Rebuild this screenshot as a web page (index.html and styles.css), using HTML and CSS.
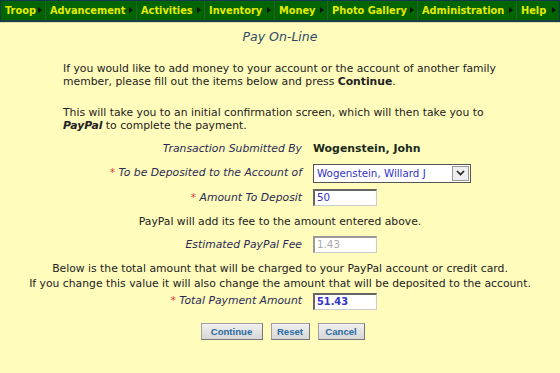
FILE: index.html
```html
<!DOCTYPE html>
<html>
<head>
<meta charset="utf-8">
<link rel="stylesheet" href="styles.css">
</head>
<body>
<nav class="nav">
  <a class="nav-item nav-troop">Troop<span class="arr"></span></a>
  <a class="nav-item nav-adv">Advancement<span class="arr"></span></a>
  <a class="nav-item nav-act">Activities<span class="arr"></span></a>
  <a class="nav-item nav-inv">Inventory<span class="arr"></span></a>
  <a class="nav-item nav-money">Money<span class="arr"></span></a>
  <a class="nav-item nav-photo">Photo Gallery<span class="arr"></span></a>
  <a class="nav-item nav-admin">Administration<span class="arr"></span></a>
  <a class="nav-item nav-last">Help<span class="arr"></span></a>
</nav>
<main class="page">
  <h1 class="title">Pay On-Line</h1>
  <p class="intro intro-first">If you would like to add money to your account or the account of another family member, please fill out the items below and press <b>Continue</b>.</p>
  <p class="intro">This will take you to an initial confirmation screen, which will then take you to <b><i>PayPal</i></b> to complete the payment.</p>
  <form class="form">
    <div class="label row-a">Transaction Submitted By</div>
    <div class="value row-a">Wogenstein, John</div>

    <div class="label row-a"><span class="req">*</span> To be Deposited to the Account of</div>
    <div class="field row-a">
      <div class="select"><span class="select-text">Wogenstein, Willard J</span><span class="select-btn"><svg width="9" height="6" viewBox="0 0 9 6"><path d="M1 1 L4.5 4.5 L8 1" fill="none" stroke="#222" stroke-width="1.6"/></svg></span></div>
    </div>

    <div class="label row-b"><span class="req">*</span> Amount To Deposit</div>
    <div class="field row-b"><span class="input">50</span></div>

    <div class="note row-a">PayPal will add its fee to the amount entered above.</div>

    <div class="label row-c">Estimated PayPal Fee</div>
    <div class="field row-c"><span class="input disabled">1.43</span></div>

    <div class="note note-wide">Below is the total amount that will be charged to your PayPal account or credit card.<br>If you change this value it will also change the amount that will be deposited to the account.</div>

    <div class="label row-d"><span class="req">*</span> Total Payment Amount</div>
    <div class="field row-d"><span class="input bold">51.43</span></div>

    <div class="buttons">
      <span class="btn btn-continue">Continue</span>
      <span class="btn btn-reset">Reset</span>
      <span class="btn btn-cancel">Cancel</span>
    </div>
  </form>
</main>
</body>
</html>
```
FILE: styles.css
```css
html, body {
  margin: 0;
  padding: 0;
  background: #fffcbc;
}
body {
  font-family: "DejaVu Sans", Verdana, sans-serif;
  font-size: 10.8px;
  color: #222;
  width: 560px;
  height: 373px;
  overflow: hidden;
}
.nav {
  display: flex;
  height: 19px;
  background: #006400;
  border: 1px solid #123a4a;
  border-bottom: 2px solid #1b3d4a;
  box-shadow: 0 1px 0 #d8e0a8;
}
.nav-item {
  position: relative;
  display: flex;
  align-items: center;
  box-sizing: border-box;
  padding-left: 4px;
  height: 19px;
  color: #e6ec00;
  font-weight: bold;
  font-size: 9.8px;
  border-right: 1px solid #2d5a3c;
  white-space: nowrap;
}
.nav-troop { width: 45px; }
.nav-adv { width: 91px; }
.nav-act { width: 68px; }
.nav-inv { width: 70px; }
.nav-money { width: 53px; }
.nav-photo { width: 90px; }
.nav-admin { width: 99px; }
.nav-last {
  flex: 1;
  border-right: none;
}
.arr {
  position: absolute;
  right: 3px;
  top: 6px;
  width: 0;
  height: 0;
  border-top: 3.5px solid transparent;
  border-bottom: 3.5px solid transparent;
  border-left: 4px solid #111;
}
.title {
  margin: 7px 0 0;
  text-align: center;
  font-size: 12.5px;
  font-weight: normal;
  font-style: italic;
  color: #2f4a6a;
  line-height: 16px;
}
.intro {
  margin: 18px 0 0 63px;
  width: 445px;
  line-height: 13px;
}
.intro-first {
  margin-top: 17px;
}
.form {
  display: grid;
  grid-template-columns: 302px 1fr;
  column-gap: 11px;
  margin-top: 5px;
  align-items: center;
}
.row-a { height: 24px; line-height: 24px; }
.row-b { height: 25px; line-height: 25px; }
.row-c { height: 21px; line-height: 21px; }
.row-d { height: 20px; line-height: 20px; }
.label {
  text-align: right;
  font-style: italic;
  color: #2a2a55;
}
.req {
  color: #e03a3a;
  font-style: normal;
}
.value {
  font-weight: bold;
  color: #1a2a1a;
  font-size: 10.9px;
}
.field {
  display: flex;
  align-items: center;
}
.select {
  display: flex;
  width: 158px;
  height: 19px;
  box-sizing: border-box;
  border: 1px solid #555;
  background: #fff;
}
.select-text {
  flex: 1;
  color: #3232c8;
  padding-left: 3px;
  line-height: 17px;
  font-size: 10.3px;
}
.select-btn {
  width: 15px;
  display: flex;
  align-items: center;
  justify-content: center;
  background: #eee;
  border: 1px solid #999;
  margin: 1px;
}
.input {
  display: block;
  width: 64px;
  height: 17px;
  box-sizing: border-box;
  border: 1px solid #ccc;
  border-top: 2px solid #666;
  border-left: 2px solid #666;
  background: #fff;
  color: #3232c8;
  padding-left: 2px;
  line-height: 13px;
  font-size: 10.3px;
}
.input.bold {
  font-weight: bold;
  font-size: 9.8px;
}
.input.disabled {
  color: #aaa;
  border-top-color: #999;
  border-left-color: #999;
}
.note {
  grid-column: 1 / 3;
  text-align: center;
}
.note-wide {
  line-height: 15px;
  padding: 6px 0 0;
}
.buttons {
  grid-column: 1 / 3;
  display: flex;
  justify-content: center;
  gap: 8px;
  margin-top: 12px;
  padding-left: 5px;
}
.btn {
  display: block;
  box-sizing: border-box;
  height: 17px;
  line-height: 15px;
  text-align: center;
  font-family: "Liberation Sans", Arial, sans-serif;
  font-weight: bold;
  font-size: 9.6px;
  color: #2a6aa0;
  background: linear-gradient(#f0f0f0, #d6d6d6);
  border: 1px solid #a0a0a0;
  border-right-color: #777;
  border-bottom-color: #777;
}
.btn-continue { width: 62px; }
.btn-reset { width: 39px; }
.btn-cancel { width: 47px; }
```
